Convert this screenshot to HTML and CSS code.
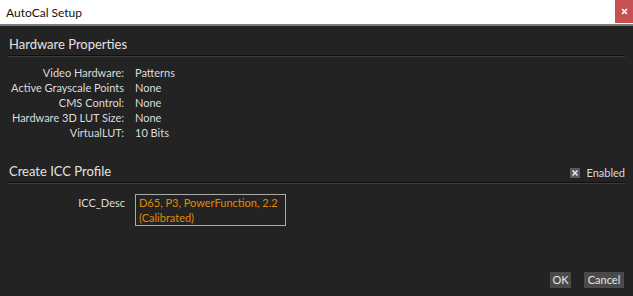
FILE: index.html
```html
<!DOCTYPE html>
<html lang="en">
<head>
    <meta charset="UTF-8">
    <title>AutoCal Setup</title>
    <link rel="stylesheet" href="styles.css">
</head>
<body>
<div class="window">
    <div class="titlebar">
        <div class="title">AutoCal Setup</div>
        <div class="btn_close">
            <svg width="7" height="7" viewBox="0 0 7 7"><path d="M1 1L6 6M6 1L1 6" stroke="#fff" stroke-width="1.6"/></svg>
        </div>
    </div>
    <div class="content">
        <div class="section_head">
            <div class="section_title">Hardware Properties</div>
        </div>
        <div class="props">
            <div class="prop_label">Video Hardware:</div><div class="prop_value">Patterns</div>
            <div class="prop_label">Active Grayscale Points</div><div class="prop_value">None</div>
            <div class="prop_label">CMS Control:</div><div class="prop_value">None</div>
            <div class="prop_label">Hardware 3D LUT Size:</div><div class="prop_value">None</div>
            <div class="prop_label">VirtualLUT:</div><div class="prop_value">10 Bits</div>
        </div>
        <div class="section_head icc_head">
            <div class="section_title">Create ICC Profile</div>
            <div class="enabled">
                <span class="check">
                    <svg width="8" height="8" viewBox="0 0 8 8"><path d="M1.5 1.5L6.5 6.5M6.5 1.5L1.5 6.5" stroke="#e8e8e8" stroke-width="1.5"/></svg>
                </span>
                <span>Enabled</span>
            </div>
        </div>
        <div class="icc_row">
            <div class="prop_label">ICC_Desc</div>
            <div class="icc_box">D65, P3, PowerFunction, 2.2<br>(Calibrated)</div>
        </div>
        <div class="btn_area">
            <div class="btn btn_ok">OK</div>
            <div class="btn btn_cancel">Cancel</div>
        </div>
    </div>
</div>
</body>
</html>
```
FILE: styles.css
```css
html, body{
    margin: 0;
    padding: 0;
    background-color: #232323;
}
.window{
    width: 633px;
    height: 296px;
    display: flex;
    flex-direction: column;
    font-family: "Lato", "Noto Sans", sans-serif;
    color: #dcdcdc;
    overflow: hidden;
}
.titlebar{
    height: 24px;
    background-color: #fff;
    border-bottom: 2px solid #7d7d7d;
    display: flex;
    align-items: flex-start;
    justify-content: space-between;
    flex-shrink: 0;
}
.titlebar>.title{
    padding: 4px 0 0 6px;
    font-size: 12px;
    line-height: 17px;
    color: #111;
}
.titlebar>.btn_close{
    width: 18px;
    height: 23px;
    background-color: #c75050;
    display: flex;
    align-items: center;
    justify-content: center;
}
.content{
    flex: 1;
    display: flex;
    flex-direction: column;
    padding: 0 8px 8px 8px;
}
.section_head{
    display: flex;
    justify-content: space-between;
    align-items: flex-end;
    margin-top: 9px;
    padding: 0 0 1px 1px;
    border-bottom: 1px solid #0f0f0f;
    box-shadow: 0 1px 0 #3c3c3c;
}
.section_head>.section_title{
    font-size: 13px;
    line-height: 19px;
    color: #e4e4e4;
}
.icc_head{
    margin-top: 22px;
}
.enabled{
    display: flex;
    align-items: center;
    gap: 6px;
    font-size: 11px;
    line-height: 15px;
    margin-bottom: 1px;
}
.enabled>.check{
    width: 10px;
    height: 10px;
    background-color: #5a5a5a;
    display: flex;
    align-items: center;
    justify-content: center;
}
.props{
    display: grid;
    grid-template-columns: 116px auto;
    column-gap: 11px;
    margin-top: 9px;
    font-size: 11px;
    line-height: 15px;
}
.prop_label{
    text-align: right;
    white-space: nowrap;
}
.icc_row{
    display: grid;
    grid-template-columns: 117px auto;
    column-gap: 10px;
    align-items: start;
    margin-top: 11px;
    font-size: 11px;
    line-height: 15px;
}
.icc_row>.prop_label{
    padding-top: 1px;
}
.icc_box{
    width: 143px;
    padding: 0 3px 0 3px;
    border: 1px solid #a9a9a9;
    color: #e08a00;
    white-space: nowrap;
}
.btn_area{
    margin-top: auto;
    display: flex;
    justify-content: flex-end;
    gap: 13px;
    padding-right: 1px;
}
.btn_area>.btn{
    height: 16px;
    line-height: 16px;
    text-align: center;
    background-color: #4a4a4a;
    font-size: 11px;
    color: #e6e6e6;
}
.btn_area>.btn_ok{
    width: 21px;
}
.btn_area>.btn_cancel{
    width: 40px;
}
```
